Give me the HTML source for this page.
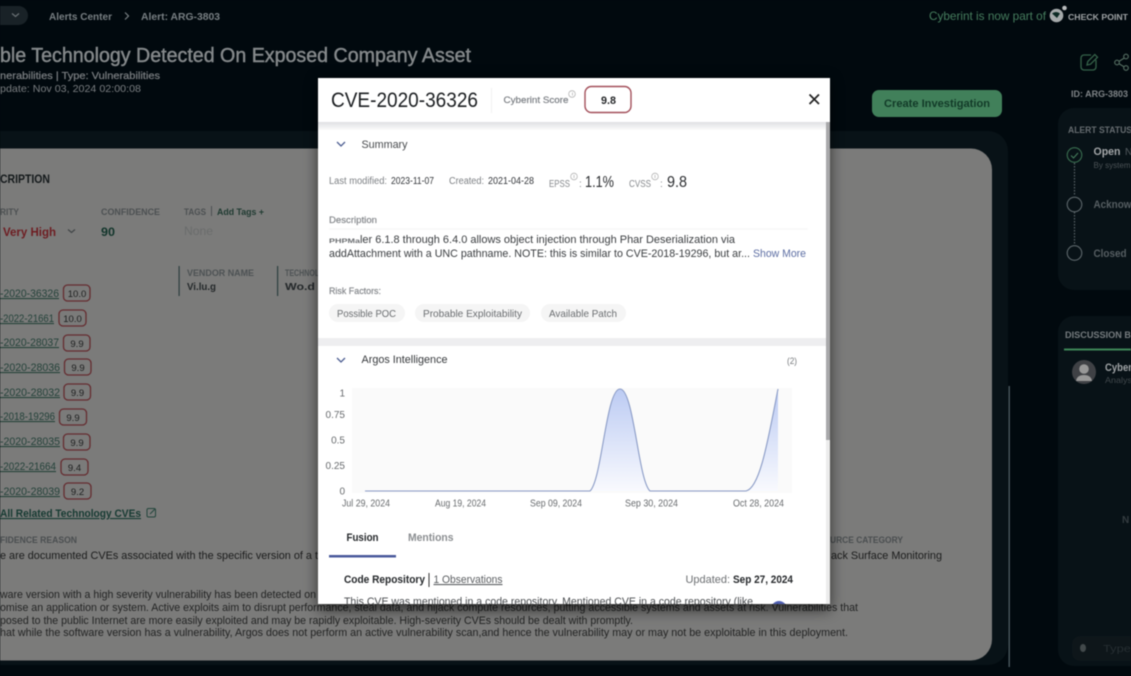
<!DOCTYPE html>
<html>
<head>
<meta charset="utf-8">
<style>
html,body{margin:0;padding:0;background:#01090e;width:1131px;height:676px;overflow:hidden}
svg{display:block;filter:blur(.5px)}
text{font-family:"Liberation Sans",sans-serif;white-space:pre}
.b{font-weight:700}
</style>
</head>
<body>
<svg xmlns="http://www.w3.org/2000/svg" width="1131" height="676" viewBox="0 0 1131 676">
<defs>
<linearGradient id="area" x1="0" y1="0" x2="0" y2="1"><stop offset="0" stop-color="#bccbf3"/><stop offset="1" stop-color="#f9fafe"/></linearGradient>
<linearGradient id="band" x1="0" y1="0" x2="0" y2="1"><stop offset="0" stop-color="#dfe0e3"/><stop offset="1" stop-color="#fbfbfb"/></linearGradient>
<filter id="sh" x="-10%" y="-10%" width="120%" height="120%"><feGaussianBlur stdDeviation="7"/></filter>
<clipPath id="mc"><rect x="318" y="78" width="512" height="526"/></clipPath>
</defs>

<rect width="1131" height="676" fill="#01090e"/>

<!-- top bar -->
<rect x="-20" y="6" width="48" height="19" rx="9.5" fill="#192227"/>
<path d="M12 13.5l3.5 3 3.5-3" fill="none" stroke="#6b7276" stroke-width="1.2"/>
<text x="49" y="20" font-size="10.5" class="b" fill="#787f83" textLength="63" lengthAdjust="spacingAndGlyphs">Alerts Center</text>
<path d="M125 12.5l3.500 3.500-3.500 3.500" fill="none" stroke="#787f83" stroke-width="1.200"/>
<text x="141" y="20" font-size="10.5" class="b" fill="#787f83" textLength="79" lengthAdjust="spacingAndGlyphs">Alert: ARG-3803</text>

<text x="0" y="62" font-size="20" fill="#85898b" stroke="#85898b" stroke-width=".45" textLength="471" lengthAdjust="spacingAndGlyphs">ble Technology Detected On Exposed Company Asset</text>
<text x="0" y="79" font-size="10.500" fill="#7a7e81" stroke="#7a7e81" stroke-width=".25" textLength="160" lengthAdjust="spacingAndGlyphs">nerabilities | Type: Vulnerabilities</text>
<text x="0" y="92" font-size="10.500" fill="#7a7e81" textLength="141" lengthAdjust="spacingAndGlyphs">pdate: Nov 03, 2024 02:00:08</text>

<text x="929" y="20" font-size="12" fill="#467d5e" textLength="117" lengthAdjust="spacingAndGlyphs">Cyberint is now part of</text>
<circle cx="1056.500" cy="15.500" r="6.800" fill="#a6aaab"/>
<path d="M1052 13.500q4-3 8 0l-3 4.500z" fill="#0c2a24"/>
<circle cx="1064.500" cy="8" r="2.300" fill="#b9bcbd"/>
<text x="1068" y="20" font-size="8" class="b" fill="#a0a4a6" textLength="60" lengthAdjust="spacingAndGlyphs">CHECK POINT</text>

<!-- side panels -->
<rect x="-30" y="131" width="1038" height="534" rx="20" fill="#081217"/>
<rect x="1008.500" y="386" width="1.400" height="281" fill="#4a585e"/>
<rect x="1058" y="108" width="100" height="182" rx="16" fill="#081217"/>
<rect x="1058" y="316" width="100" height="350" rx="16" fill="#081217"/>

<!-- icons -->
<path d="M1091 55h-7a3 3 0 0 0-3 3v9a3 3 0 0 0 3 3h9a3 3 0 0 0 3-3v-7" fill="none" stroke="#356249" stroke-width="1.300"/>
<path d="M1087 65l.8-3.500 7-7 2.700 2.700-7 7z" fill="none" stroke="#356249" stroke-width="1.300"/>
<path d="M1126 57l-9 5.500 9 5.500" fill="none" stroke="#566f63" stroke-width="1.100"/>
<circle cx="1126" cy="56.500" r="2.300" fill="#01090e" stroke="#566f63" stroke-width="1.100"/>
<circle cx="1117" cy="62.500" r="2.300" fill="#01090e" stroke="#566f63" stroke-width="1.100"/>
<circle cx="1126" cy="68" r="2.300" fill="#01090e" stroke="#566f63" stroke-width="1.100"/>
<text x="1071" y="97" font-size="9.500" class="b" fill="#7f8487" textLength="57" lengthAdjust="spacingAndGlyphs">ID: ARG-3803</text>

<!-- alert status -->
<text x="1068" y="133" font-size="9" class="b" fill="#656b6f" textLength="64" lengthAdjust="spacingAndGlyphs">ALERT STATUS</text>
<path d="M1074.500 163v33M1074.500 212v33" stroke="#5a6468" stroke-width="1.200" stroke-dasharray="1.500 1.500" fill="none"/>
<circle cx="1074.500" cy="155" r="7.300" fill="none" stroke="#3a6f50" stroke-width="1.100"/>
<path d="M1071 155.500l2.500 2.500 4.500-5" fill="none" stroke="#457d5c" stroke-width="1.100"/>
<circle cx="1074.500" cy="204.500" r="7.300" fill="none" stroke="#5e686c" stroke-width="1.100"/>
<circle cx="1074.500" cy="253" r="7.300" fill="none" stroke="#5e686c" stroke-width="1.100"/>
<text x="1093.500" y="155" font-size="11" class="b" fill="#a4a7a9" textLength="27" lengthAdjust="spacingAndGlyphs">Open</text>
<text x="1125" y="155" font-size="10" fill="#555c60">N</text>
<text x="1093.500" y="168" font-size="8.500" fill="#4b5256" textLength="37" lengthAdjust="spacingAndGlyphs">By system</text>
<text x="1093.500" y="208" font-size="11" class="b" fill="#565e62" textLength="38" lengthAdjust="spacingAndGlyphs">Acknow</text>
<text x="1093.500" y="257" font-size="11" class="b" fill="#565e62" textLength="33" lengthAdjust="spacingAndGlyphs">Closed</text>

<!-- discussion -->
<text x="1065" y="338" font-size="9" class="b" fill="#767c7f" textLength="66" lengthAdjust="spacingAndGlyphs">DISCUSSION B</text>
<rect x="1064" y="348.500" width="67" height="2" fill="#3e8757"/>
<circle cx="1084" cy="372" r="12" fill="#3f4145"/>
<circle cx="1084" cy="369" r="4.800" fill="#989898"/>
<path d="M1076 381q1-6 8-6t8 6z" fill="#989898"/>
<text x="1105" y="371" font-size="11" class="b" fill="#a0a4a6" textLength="27" lengthAdjust="spacingAndGlyphs">Cyber</text>
<text x="1105" y="383" font-size="8.500" fill="#41484c" textLength="27" lengthAdjust="spacingAndGlyphs">Analys</text>
<text x="1122" y="523" font-size="10" class="b" fill="#343c40">N</text>
<rect x="1072" y="636" width="80" height="25" rx="8" fill="#0e161a"/>
<ellipse cx="1083" cy="648" rx="3" ry="4" fill="#42494b"/>
<text x="1103" y="652" font-size="10" fill="#262e32" textLength="28" lengthAdjust="spacingAndGlyphs">Type</text>

<!-- main grey card -->
<rect x="-40" y="148.500" width="1032" height="512" rx="21" fill="#7b7b7a"/>

<text x="0" y="183" font-size="12" class="b" fill="#14191b" textLength="50" lengthAdjust="spacingAndGlyphs">CRIPTION</text>
<text x="0" y="215" font-size="9" class="b" fill="#4c5052" textLength="19" lengthAdjust="spacingAndGlyphs">RITY</text>
<text x="101" y="215" font-size="9" class="b" fill="#4c5052" textLength="59" lengthAdjust="spacingAndGlyphs">CONFIDENCE</text>
<text x="184" y="215" font-size="9" class="b" fill="#4c5052" textLength="22" lengthAdjust="spacingAndGlyphs">TAGS</text>
<rect x="211" y="206" width="1" height="10" fill="#4c5052"/>
<text x="217" y="215" font-size="9" class="b" fill="#1f3a31" textLength="47" lengthAdjust="spacingAndGlyphs">Add Tags +</text>
<text x="3" y="236" font-size="12" class="b" fill="#6e1d22" textLength="53" lengthAdjust="spacingAndGlyphs">Very High</text>
<path d="M68 229.500l3.500 3 3.500-3" fill="none" stroke="#414547" stroke-width="1.200"/>
<text x="101" y="236" font-size="12" class="b" fill="#12352b" textLength="14" lengthAdjust="spacingAndGlyphs">90</text>
<text x="184" y="235" font-size="12" fill="#6a6c6c" textLength="29" lengthAdjust="spacingAndGlyphs">None</text>

<rect x="178.500" y="266" width="1.200" height="30" fill="#2c3f3f"/>
<rect x="277" y="266" width="1.200" height="30" fill="#2c3f3f"/>
<text x="187" y="276" font-size="9" class="b" fill="#4d5254" textLength="67" lengthAdjust="spacingAndGlyphs">VENDOR NAME</text>
<text x="285" y="276" font-size="9" class="b" fill="#4d5254" textLength="50" lengthAdjust="spacingAndGlyphs">TECHNOLOGY</text>
<text x="187" y="290" font-size="10" class="b" fill="#24282a" textLength="29" lengthAdjust="spacingAndGlyphs">Vi.lu.g</text>
<text x="285" y="290" font-size="10" class="b" fill="#24282a" textLength="30" lengthAdjust="spacingAndGlyphs">Wo.d</text>

<!-- CVE rows -->
<g font-size="11" fill="#24423a" text-decoration="underline">
<text x="0" y="297" textLength="59" lengthAdjust="spacingAndGlyphs">-2020-36326</text>
<text x="0" y="322" textLength="54" lengthAdjust="spacingAndGlyphs">-2022-21661</text>
<text x="0" y="346" textLength="59" lengthAdjust="spacingAndGlyphs">-2020-28037</text>
<text x="0" y="371" textLength="60" lengthAdjust="spacingAndGlyphs">-2020-28036</text>
<text x="0" y="396" textLength="60" lengthAdjust="spacingAndGlyphs">-2020-28032</text>
<text x="0" y="420" textLength="55" lengthAdjust="spacingAndGlyphs">-2018-19296</text>
<text x="0" y="445" textLength="60" lengthAdjust="spacingAndGlyphs">-2020-28035</text>
<text x="0" y="470" textLength="56" lengthAdjust="spacingAndGlyphs">-2022-21664</text>
<text x="0" y="495" textLength="60" lengthAdjust="spacingAndGlyphs">-2020-28039</text>
</g>
<g fill="none" stroke="#652c30" stroke-width="1.300">
<rect x="63.500" y="285" width="26.500" height="16" rx="4"/>
<rect x="59" y="310" width="27" height="16" rx="4"/>
<rect x="63.500" y="335" width="26.500" height="16" rx="4"/>
<rect x="64.500" y="359" width="26.500" height="16" rx="4"/>
<rect x="64" y="384" width="26.500" height="16" rx="4"/>
<rect x="59.500" y="409" width="27" height="16" rx="4"/>
<rect x="63.500" y="434" width="26.500" height="16" rx="4"/>
<rect x="61" y="459" width="27" height="16" rx="4"/>
<rect x="64" y="483" width="27" height="16" rx="4"/>
</g>
<g font-size="9.500" fill="#1c1e1e" text-anchor="middle">
<text x="77" y="297">10.0</text>
<text x="72.500" y="322">10.0</text>
<text x="77" y="347">9.9</text>
<text x="78" y="371">9.9</text>
<text x="77.500" y="396">9.9</text>
<text x="73" y="421">9.9</text>
<text x="77" y="446">9.9</text>
<text x="74.500" y="471">9.4</text>
<text x="77.500" y="495">9.2</text>
</g>
<text x="0" y="517" font-size="11" class="b" fill="#163a32" text-decoration="underline" textLength="141" lengthAdjust="spacingAndGlyphs">All Related Technology CVEs</text>
<rect x="147" y="508.500" width="8.500" height="8.500" rx="1.500" fill="none" stroke="#23463c" stroke-width="1"/>
<path d="M150 514l5-5" stroke="#23463c" stroke-width="1" fill="none"/>

<text x="0" y="543" font-size="9" class="b" fill="#4a4e50" textLength="77" lengthAdjust="spacingAndGlyphs">FIDENCE REASON</text>
<text x="0" y="559" font-size="11" fill="#1b1c1c" textLength="318" lengthAdjust="spacingAndGlyphs">e are documented CVEs associated with the specific version of a t</text>
<text x="0" y="598" font-size="11" fill="#232424" textLength="316" lengthAdjust="spacingAndGlyphs">ware version with a high severity vulnerability has been detected on</text>
<text x="0" y="611" font-size="11" fill="#232424" textLength="858" lengthAdjust="spacingAndGlyphs">omise an application or system. Active exploits aim to disrupt performance, steal data, and hijack compute resources, putting accessible systems and assets at risk. Vulnerabilities that</text>
<text x="0" y="624" font-size="11" fill="#232424" textLength="633" lengthAdjust="spacingAndGlyphs">posed to the public Internet are more easily exploited and may be rapidly exploitable. High-severity CVEs should be dealt with promptly.</text>
<text x="0" y="636" font-size="11" fill="#232424" textLength="848" lengthAdjust="spacingAndGlyphs">hat while the software version has a vulnerability, Argos does not perform an active vulnerability scan,and hence the vulnerability may or may not be exploitable in this deployment.</text>
<text x="830" y="543" font-size="9" class="b" fill="#4a4e50" textLength="73" lengthAdjust="spacingAndGlyphs">URCE CATEGORY</text>
<text x="831" y="559" font-size="11" fill="#1b1c1c" textLength="111" lengthAdjust="spacingAndGlyphs">ack Surface Monitoring</text>

<!-- green button -->
<rect x="872" y="90" width="130" height="27" rx="7" fill="#41805a"/>
<text x="884" y="107" font-size="11" class="b" fill="#123a28" textLength="106" lengthAdjust="spacingAndGlyphs">Create Investigation</text>

<!-- modal -->
<rect x="318" y="80" width="512" height="530" fill="#000" opacity=".6" filter="url(#sh)"/>
<g clip-path="url(#mc)">
<rect x="318" y="78" width="512" height="526" fill="#fff"/>
<rect x="318" y="122" width="508" height="8" fill="url(#band)"/>
<rect x="826" y="122" width="4" height="318" fill="#a8a8aa"/>
<rect x="826" y="440" width="4" height="164" fill="#ececec"/>

<text x="331" y="107" font-size="21" fill="#1b1e21" textLength="147" lengthAdjust="spacingAndGlyphs">CVE-2020-36326</text>
<rect x="491" y="88" width="1" height="25" fill="#f1f1f1"/>
<text x="503.500" y="103" font-size="9.500" fill="#7a7e83" stroke="#7a7e83" stroke-width=".2" textLength="65" lengthAdjust="spacingAndGlyphs">Cyberint Score</text>
<circle cx="572" cy="94" r="3.300" fill="none" stroke="#b5b5b5" stroke-width=".8"/>
<rect x="572" y="92.500" width=".8" height="3" fill="#b5b5b5"/>
<rect x="585" y="86.500" width="46" height="26" rx="6.500" fill="#fff" stroke="#a34f5a" stroke-width="1.400"/>
<text x="601" y="104" font-size="11" class="b" fill="#26282a" textLength="15" lengthAdjust="spacingAndGlyphs">9.8</text>
<path d="M809.500 94.500l9.500 9.500M819 94.500l-9.500 9.500" stroke="#222" stroke-width="1.700" fill="none"/>

<path d="M337 142l4 4 4-4" fill="none" stroke="#4e5f92" stroke-width="1.300"/>
<text x="361.500" y="148" font-size="11" fill="#474a4d" textLength="46" lengthAdjust="spacingAndGlyphs">Summary</text>

<text x="329" y="184" font-size="10" fill="#7d8084" textLength="58" lengthAdjust="spacingAndGlyphs">Last modified:</text>
<text x="391" y="184" font-size="10.500" fill="#33363a" textLength="43" lengthAdjust="spacingAndGlyphs">2023-11-07</text>
<text x="449" y="184" font-size="10" fill="#7d8084" textLength="35" lengthAdjust="spacingAndGlyphs">Created:</text>
<text x="488" y="184" font-size="10.500" fill="#33363a" textLength="46" lengthAdjust="spacingAndGlyphs">2021-04-28</text>
<text x="549" y="187" font-size="10" fill="#85888c" textLength="21" lengthAdjust="spacingAndGlyphs">EPSS</text>
<circle cx="574" cy="176.500" r="3.300" fill="none" stroke="#b5b5b5" stroke-width=".8"/>
<rect x="573.600" y="175" width=".8" height="3" fill="#b5b5b5"/>
<text x="579" y="187" font-size="10" fill="#85888c">:</text>
<text x="585" y="187" font-size="16" fill="#2b2d30" textLength="29" lengthAdjust="spacingAndGlyphs">1.1%</text>
<text x="629" y="187" font-size="10" fill="#85888c" textLength="22" lengthAdjust="spacingAndGlyphs">CVSS</text>
<circle cx="655" cy="176.500" r="3.300" fill="none" stroke="#b5b5b5" stroke-width=".8"/>
<rect x="654.600" y="175" width=".8" height="3" fill="#b5b5b5"/>
<text x="660" y="187" font-size="10" fill="#85888c">:</text>
<text x="667" y="187" font-size="16" fill="#2b2d30" textLength="20" lengthAdjust="spacingAndGlyphs">9.8</text>

<text x="329" y="223" font-size="9.500" fill="#85888c" stroke="#85888c" stroke-width=".2" textLength="48" lengthAdjust="spacingAndGlyphs">Description</text>
<rect x="329" y="228.500" width="479" height="1" fill="#f5f5f5"/>
<text x="329" y="243" font-size="6.500" class="b" fill="#6a6d70" textLength="31" lengthAdjust="spacingAndGlyphs">PHPMa</text>
<text x="360" y="243" font-size="11" fill="#3a3d40" textLength="375" lengthAdjust="spacingAndGlyphs">ler 6.1.8 through 6.4.0 allows object injection through Phar Deserialization via</text>
<text x="329" y="257" font-size="11" fill="#3a3d40" textLength="421" lengthAdjust="spacingAndGlyphs">addAttachment with a UNC pathname. NOTE: this is similar to CVE-2018-19296, but ar...</text>
<text x="753" y="257" font-size="11" fill="#5d6ea3" textLength="53" lengthAdjust="spacingAndGlyphs">Show More</text>

<text x="329" y="294" font-size="9.500" fill="#85888c" stroke="#85888c" stroke-width=".2" textLength="52" lengthAdjust="spacingAndGlyphs">Risk Factors:</text>
<rect x="329" y="304" width="76" height="18" rx="9" fill="#f5f5f5"/>
<rect x="415" y="304" width="115" height="18" rx="9" fill="#f5f5f5"/>
<rect x="541" y="304" width="85" height="18" rx="9" fill="#f5f5f5"/>
<text x="337" y="317" font-size="10.500" fill="#6a6d70" textLength="59" lengthAdjust="spacingAndGlyphs">Possible POC</text>
<text x="423" y="317" font-size="10.500" fill="#6a6d70" textLength="99" lengthAdjust="spacingAndGlyphs">Probable Exploitability</text>
<text x="549" y="317" font-size="10.500" fill="#6a6d70" textLength="68" lengthAdjust="spacingAndGlyphs">Available Patch</text>

<rect x="318" y="338" width="508" height="8" fill="#eeeef0"/>

<path d="M337 358l4 4 4-4" fill="none" stroke="#4e5f92" stroke-width="1.300"/>
<text x="361.500" y="363" font-size="11" fill="#36393c" textLength="86" lengthAdjust="spacingAndGlyphs">Argos Intelligence</text>
<text x="787" y="364" font-size="9" fill="#777a7d" textLength="10" lengthAdjust="spacingAndGlyphs">(2)</text>

<!-- chart -->
<rect x="352" y="388" width="440" height="105" fill="#fafafa"/>
<path d="M590 491C602 480 606 389 620 389C634 389 638 480 650 491Z" fill="url(#area)"/>
<path d="M746 491C760 488 768 440 778 389V491Z" fill="url(#area)"/>
<path d="M365 491H590C602 480 606 389 620 389C634 389 638 480 650 491H746C760 488 768 440 778 389" fill="none" stroke="#8a9bc6" stroke-width="1.100"/>
<g font-size="10" fill="#696c6f" text-anchor="end">
<text x="345" y="396.500">1</text>
<text x="345" y="418">0.75</text>
<text x="345" y="443.500">0.5</text>
<text x="345" y="469">0.25</text>
<text x="345" y="494.500">0</text>
</g>
<g font-size="10" fill="#696c6f">
<text x="342" y="506.500" textLength="48" lengthAdjust="spacingAndGlyphs">Jul 29, 2024</text>
<text x="435" y="506.500" textLength="51" lengthAdjust="spacingAndGlyphs">Aug 19, 2024</text>
<text x="530" y="506.500" textLength="52" lengthAdjust="spacingAndGlyphs">Sep 09, 2024</text>
<text x="625" y="506.500" textLength="53" lengthAdjust="spacingAndGlyphs">Sep 30, 2024</text>
<text x="733" y="506.500" textLength="51" lengthAdjust="spacingAndGlyphs">Oct 28, 2024</text>
</g>

<text x="346.500" y="541" font-size="11" class="b" fill="#25282b" textLength="32" lengthAdjust="spacingAndGlyphs">Fusion</text>
<text x="408" y="541" font-size="11" class="b" fill="#8b8e91" textLength="45.500" lengthAdjust="spacingAndGlyphs">Mentions</text>
<rect x="329" y="555" width="67" height="2.500" fill="#4a5a9c"/>

<text x="344" y="583" font-size="11" class="b" fill="#25282b" textLength="81" lengthAdjust="spacingAndGlyphs">Code Repository</text>
<rect x="428.500" y="573" width="1" height="14" fill="#333"/>
<text x="433.500" y="583" font-size="11" fill="#5a5d60" text-decoration="underline" textLength="69" lengthAdjust="spacingAndGlyphs">1 Observations</text>
<text x="685.500" y="583" font-size="11" fill="#6c6f72" textLength="44.500" lengthAdjust="spacingAndGlyphs">Updated:</text>
<text x="733" y="583" font-size="11" class="b" fill="#25282b" textLength="60" lengthAdjust="spacingAndGlyphs">Sep 27, 2024</text>
<text x="344" y="605" font-size="11" fill="#4a4d50" textLength="409" lengthAdjust="spacingAndGlyphs">This CVE was mentioned in a code repository. Mentioned CVE in a code repository (like</text>
<circle cx="779" cy="609" r="8" fill="#4f5fb2"/>
</g>
</svg>
</body>
</html>
